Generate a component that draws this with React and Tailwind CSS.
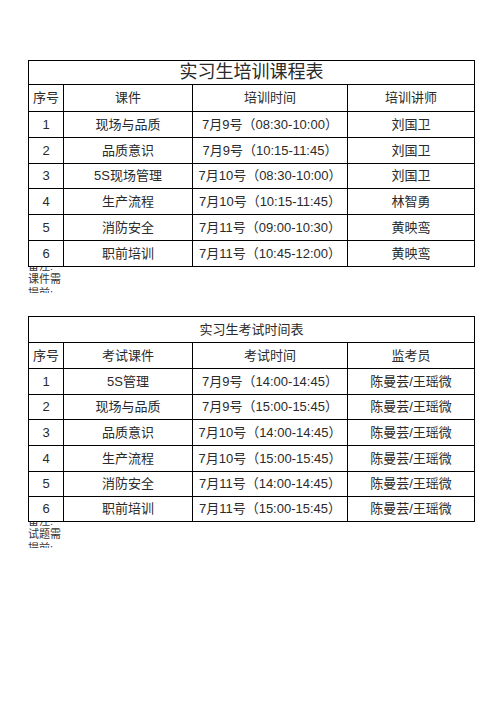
import React from "react";

const trainingRows = [
  ["1", "现场与品质", "7月9号（08:30-10:00）", "刘国卫"],
  ["2", "品质意识", "7月9号（10:15-11:45）", "刘国卫"],
  ["3", "5S现场管理", "7月10号（08:30-10:00）", "刘国卫"],
  ["4", "生产流程", "7月10号（10:15-11:45）", "林智勇"],
  ["5", "消防安全", "7月11号（09:00-10:30）", "黄映鸾"],
  ["6", "职前培训", "7月11号（10:45-12:00）", "黄映鸾"],
];

const examRows = [
  ["1", "5S管理", "7月9号（14:00-14:45）", "陈曼芸/王瑶微"],
  ["2", "现场与品质", "7月9号（15:00-15:45）", "陈曼芸/王瑶微"],
  ["3", "品质意识", "7月10号（14:00-14:45）", "陈曼芸/王瑶微"],
  ["4", "生产流程", "7月10号（15:00-15:45）", "陈曼芸/王瑶微"],
  ["5", "消防安全", "7月11号（14:00-14:45）", "陈曼芸/王瑶微"],
  ["6", "职前培训", "7月11号（15:00-15:45）", "陈曼芸/王瑶微"],
];

function Row({ cells, h }) {
  return (
    <div className={`grid grid-cols-[35px_129px_155px_127px] ${h}`}>
      {cells.map((c, i) => (
        <div key={i} className="flex items-center justify-center border-r border-b border-black whitespace-nowrap">
          {c}
        </div>
      ))}
    </div>
  );
}

function Schedule({ title, titleClass, headers, rows, heights, note }) {
  return (
    <div>
      <div className="w-[447px] border-l border-t border-black text-[13px] text-[#2a2a2a]">
        <div className={`flex items-center justify-center border-r border-b border-black ${titleClass}`}>{title}</div>
        <Row cells={headers} h={heights[0]} />
        {rows.map((r, i) => (
          <Row key={i} cells={r} h={heights[i + 1]} />
        ))}
      </div>
      <div className="h-[26px] w-[35px] overflow-hidden flex flex-col justify-center text-[11px] leading-[13.5px] text-[#333]">
        <div>{note[0]}</div>
        <div>{note[1]}</div>
        <div>{note[2]}</div>
      </div>
    </div>
  );
}

export default function App() {
  return (
    <div className="w-[496px] h-[702px] bg-white font-['Liberation_Sans','Noto_Sans_CJK_SC',sans-serif]">
      <div className="pt-[60px] pl-[28px]">
        <Schedule
          title="实习生培训课程表"
          titleClass="h-[24px] text-[18px]"
          headers={["序号", "课件", "培训时间", "培训讲师"]}
          rows={trainingRows}
          heights={["h-[27px]", "h-[26px]", "h-[26px]", "h-[25px]", "h-[26px]", "h-[26px]", "h-[26px]"]}
          note={["备注:", "课件需", "提前:"]}
        />
        <div className="mt-[23px]">
          <Schedule
            title="实习生考试时间表"
            titleClass="h-[26px] text-[13px]"
            headers={["序号", "考试课件", "考试时间", "监考员"]}
            rows={examRows}
            heights={["h-[26px]", "h-[26px]", "h-[25px]", "h-[26px]", "h-[26px]", "h-[25px]", "h-[25px]"]}
            note={["备注:", "试题需", "提前:"]}
          />
        </div>
      </div>
    </div>
  );
}
